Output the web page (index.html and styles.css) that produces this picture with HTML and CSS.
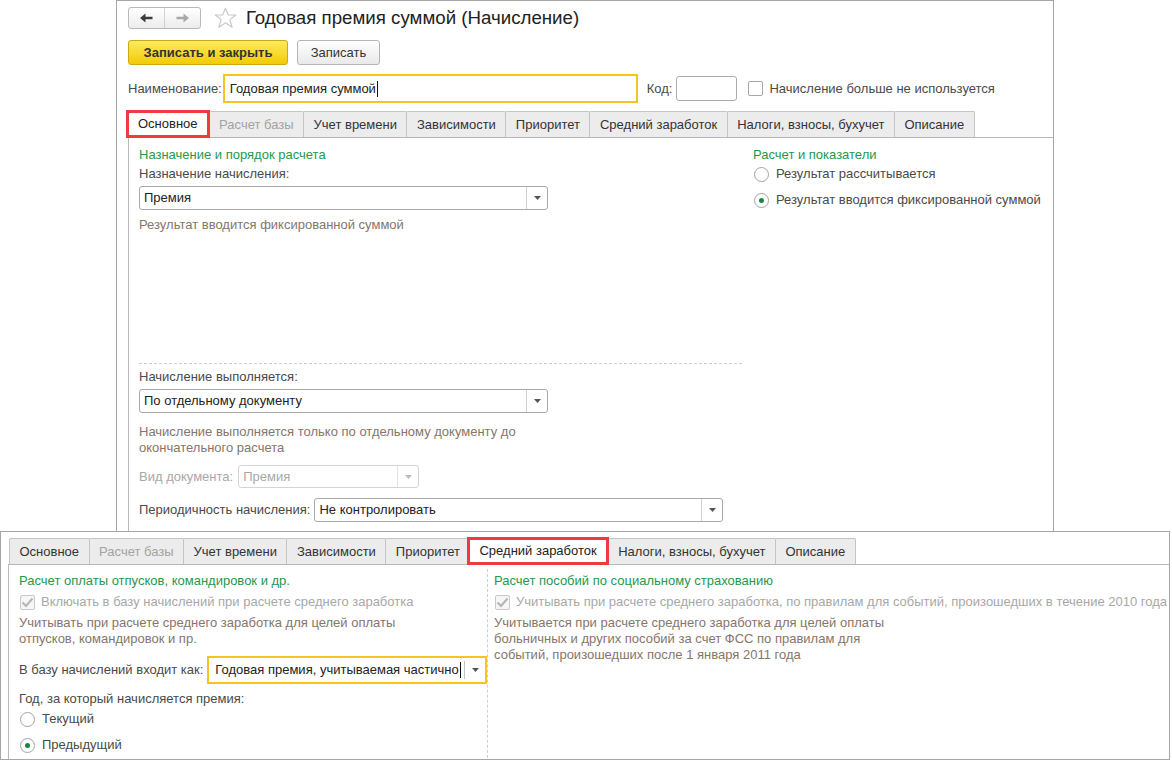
FILE: index.html
```html
<!DOCTYPE html>
<html lang="ru">
<head>
    <meta charset="UTF-8">
    <title>Годовая премия суммой (Начисление)</title>
    <link rel="stylesheet" href="styles.css">
</head>
<body>
    <div class="window main-window">
        <div class="win-head">
            <div class="nav-group">
                <span class="nav-btn">
                    <svg width="13" height="10" viewBox="0 0 13 10"><path d="M0 5L5.5 0.5V3.8H12.5V6.2H5.5V9.5Z" fill="#3c3c3c"/></svg>
                </span>
                <span class="nav-btn">
                    <svg width="13" height="10" viewBox="0 0 13 10"><path d="M13 5L7.5 0.5V3.8H0.5V6.2H7.5V9.5Z" fill="#a8a8a8"/></svg>
                </span>
            </div>
            <svg class="star" width="23" height="22" viewBox="0 0 23 22"><path d="M11.5 1.2L14.4 8H21.8L15.9 12.6L18.1 20.2L11.5 15.8L4.9 20.2L7.1 12.6L1.2 8H8.6Z" fill="none" stroke="#c9c9c9" stroke-width="1.2" stroke-linejoin="round"/></svg>
            <h1 class="win-title">Годовая премия суммой (Начисление)</h1>
        </div>

        <div class="cmd-bar">
            <button class="btn btn-primary">Записать и закрыть</button>
            <button class="btn btn-save">Записать</button>
        </div>

        <div class="field-row">
            <span class="label">Наименование:</span>
            <div class="input focused name-input">Годовая премия суммой<span class="caret"></span></div>
            <span class="label code-label">Код:</span>
            <div class="input code-input"></div>
            <span class="checkbox"></span>
            <span class="label check-label">Начисление больше не используется</span>
        </div>

        <div class="tabs">
            <div class="tab active">Основное</div>
            <div class="tab disabled">Расчет базы</div>
            <div class="tab">Учет времени</div>
            <div class="tab">Зависимости</div>
            <div class="tab">Приоритет</div>
            <div class="tab">Средний заработок</div>
            <div class="tab">Налоги, взносы, бухучет</div>
            <div class="tab">Описание</div>
        </div>

        <div class="tab-page">
            <div class="col col-main">
                <div class="group-title">Назначение и порядок расчета</div>
                <div class="label row-label">Назначение начисления:</div>
                <div class="select sel-wide sel-first">
                    <span class="select-value">Премия</span>
                    <span class="select-btn"><svg width="7" height="4" viewBox="0 0 7 4"><path d="M0 0H7L3.5 4Z" fill="#555"/></svg></span>
                </div>
                <div class="hint hint-first">Результат вводится фиксированной суммой</div>

                <div class="dashed-line"></div>

                <div class="label row-label after-line">Начисление выполняется:</div>
                <div class="select sel-wide sel-first">
                    <span class="select-value">По отдельному документу</span>
                    <span class="select-btn"><svg width="7" height="4" viewBox="0 0 7 4"><path d="M0 0H7L3.5 4Z" fill="#555"/></svg></span>
                </div>
                <div class="hint hint-doc">Начисление выполняется только по отдельному документу до<br>окончательного расчета</div>

                <div class="inline-row doc-row">
                    <span class="label disabled-text">Вид документа:</span>
                    <div class="select select-disabled sel-doc">
                        <span class="select-value">Премия</span>
                        <span class="select-btn"><svg width="7" height="4" viewBox="0 0 7 4"><path d="M0 0H7L3.5 4Z" fill="#bbb"/></svg></span>
                    </div>
                </div>

                <div class="inline-row period-row">
                    <span class="label">Периодичность начисления:</span>
                    <div class="select sel-wide sel-period">
                        <span class="select-value">Не контролировать</span>
                        <span class="select-btn"><svg width="7" height="4" viewBox="0 0 7 4"><path d="M0 0H7L3.5 4Z" fill="#555"/></svg></span>
                    </div>
                </div>
            </div>

            <div class="col col-side">
                <div class="group-title">Расчет и показатели</div>
                <div class="radio-row first-radio"><span class="radio"></span><span class="label">Результат рассчитывается</span></div>
                <div class="radio-row"><span class="radio checked"></span><span class="label">Результат вводится фиксированной суммой</span></div>
            </div>
        </div>
    </div>

    <div class="window bottom-window">
        <div class="tabs">
            <div class="tab">Основное</div>
            <div class="tab disabled">Расчет базы</div>
            <div class="tab">Учет времени</div>
            <div class="tab">Зависимости</div>
            <div class="tab">Приоритет</div>
            <div class="tab active">Средний заработок</div>
            <div class="tab">Налоги, взносы, бухучет</div>
            <div class="tab">Описание</div>
        </div>

        <div class="tab-page split">
            <div class="col col-half">
                <div class="group-title">Расчет оплаты отпусков, командировок и др.</div>
                <div class="check-row">
                    <span class="checkbox checked-disabled"><svg width="13" height="11" viewBox="0 0 13 11"><path d="M1.5 5.5L5 9L11.5 1.5" fill="none" stroke="#b4b4b4" stroke-width="2"/></svg></span>
                    <span class="label disabled-text">Включать в базу начислений при расчете среднего заработка</span>
                </div>
                <div class="hint hint-block">Учитывать при расчете среднего заработка для целей оплаты<br>отпусков, командировок и пр.</div>
                <div class="inline-row base-row">
                    <span class="label">В базу начислений входит как:</span>
                    <div class="input focused base-input">
                        <span class="select-value">Годовая премия, учитываемая частично<span class="caret"></span></span>
                        <span class="select-btn"><svg width="7" height="4" viewBox="0 0 7 4"><path d="M0 0H7L3.5 4Z" fill="#555"/></svg></span>
                    </div>
                </div>
                <div class="label year-label">Год, за который начисляется премия:</div>
                <div class="radio-row year-first"><span class="radio"></span><span class="label">Текущий</span></div>
                <div class="radio-row"><span class="radio checked"></span><span class="label">Предыдущий</span></div>
            </div>

            <div class="col col-social">
                <div class="group-title">Расчет пособий по социальному страхованию</div>
                <div class="check-row">
                    <span class="checkbox checked-disabled"><svg width="13" height="11" viewBox="0 0 13 11"><path d="M1.5 5.5L5 9L11.5 1.5" fill="none" stroke="#b4b4b4" stroke-width="2"/></svg></span>
                    <span class="label disabled-text nowrap">Учитывать при расчете среднего заработка, по правилам для событий, произошедших в течение 2010 года</span>
                </div>
                <div class="hint hint-block">Учитывается при расчете среднего заработка для целей оплаты<br>больничных и других пособий за счет ФСС по правилам для<br>событий, произошедших после 1 января 2011 года</div>
            </div>
        </div>
    </div>
</body>
</html>
```

FILE: styles.css
```css
body {
    margin: 0;
    width: 1172px;
    height: 760px;
    position: relative;
    overflow: hidden;
    background: #fff;
    font-family: 'Liberation Sans', Arial, sans-serif;
    font-size: 13px;
    line-height: 16px;
    color: #444;
}

/* windows */
.window {
    position: absolute;
    box-sizing: border-box;
    background: #fff;
    border: 1px solid #a6a6a6;
}
.main-window {
    left: 116px;
    top: 0;
    width: 938px;
    height: 560px;
    padding: 6px 0 0 11px;
}
.bottom-window {
    left: 0;
    top: 531px;
    width: 1170px;
    height: 229px;
    padding: 5px 0 0 7px;
    z-index: 2;
    overflow: hidden;
}

/* header */
.win-head {
    display: flex;
    align-items: center;
    height: 22px;
}
.nav-group {
    display: flex;
    width: 73px;
    height: 22px;
    box-sizing: border-box;
    border: 1px solid #b9b9b9;
    border-radius: 3px;
    background: linear-gradient(#fff, #ececec);
}
.nav-btn {
    flex: 1;
    display: flex;
    align-items: center;
    justify-content: center;
}
.nav-btn + .nav-btn {
    border-left: 1px solid #d2d2d2;
}
.star {
    margin-left: 13px;
}
.win-title {
    margin: 0 0 0 9px;
    font-size: 18.7px;
    font-weight: normal;
    color: #222;
    line-height: 22px;
}

.cmd-bar {
    display: flex;
    gap: 9px;
    margin-top: 11px;
}
.btn {
    height: 25px;
    box-sizing: border-box;
    border: 1px solid #b5b5b5;
    border-radius: 3px;
    background: linear-gradient(#fff, #e9e9e9);
    font-family: 'Liberation Sans', Arial, sans-serif;
    font-size: 13px;
    color: #333;
    padding: 0;
}
.btn-primary {
    width: 160px;
    background: linear-gradient(#fdeb5e, #f2cb07);
    border-color: #cdaa12;
    font-weight: bold;
}
.btn-save {
    width: 83px;
}

/* fields */
.label {
    color: #4a4a4a;
    white-space: nowrap;
}
.field-row {
    display: flex;
    align-items: center;
    height: 29px;
    margin-top: 9px;
}
.input {
    box-sizing: border-box;
    display: flex;
    align-items: center;
    height: 25px;
    border: 1px solid #ababab;
    border-radius: 3px;
    background: #fff;
    color: #222;
    padding-left: 5px;
}
.input.focused {
    border: 2px solid #f4c51f;
    border-radius: 0;
}
.name-input {
    width: 415px;
    height: 29px;
    margin-left: 1px;
}
.caret {
    display: inline-block;
    width: 1px;
    height: 16px;
    background: #111;
    vertical-align: middle;
    margin-left: 1px;
}
.code-label {
    margin-left: 9px;
}
.code-input {
    width: 61px;
    margin-left: 4px;
}
.checkbox {
    box-sizing: border-box;
    width: 15px;
    height: 15px;
    border: 1px solid #a6a6a6;
    border-radius: 2px;
    background: #fff;
    margin-left: 11px;
    display: inline-flex;
    align-items: center;
    justify-content: center;
}
.check-label {
    margin-left: 6px;
}

/* tabs */
.tabs {
    display: flex;
    align-items: flex-end;
    height: 27px;
    margin-top: 7px;
}
.bottom-window .tabs {
    margin-top: 0;
    padding-left: 1px;
}
.tab {
    box-sizing: border-box;
    height: 26px;
    display: flex;
    align-items: center;
    padding: 0 9.5px;
    margin-right: -1px;
    border: 1px solid #c4c4c4;
    border-bottom: none;
    border-radius: 2px 2px 0 0;
    background: #ececec;
    color: #333;
    white-space: nowrap;
}
.tab.disabled {
    color: #a3a3a3;
}
.tab.active {
    position: relative;
    z-index: 1;
    height: 28px;
    margin: 0 -1px -1px -2px;
    padding: 0 9px;
    background: #fff;
    border: 3px solid #ef3b3f;
    border-radius: 0;
    color: #222;
}

.tab-page {
    display: flex;
    border-top: 1px solid #b8b8b8;
    border-left: 1px solid #b8b8b8;
    padding: 9px 0 0 10px;
    height: 420px;
}
.bottom-window .tab-page {
    padding-top: 8px;
    height: 200px;
}

.col {
    display: flex;
    flex-direction: column;
}
.col-main {
    width: 603px;
}
.col-side {
    margin-left: 11px;
}

.group-title {
    color: #1d9a4e;
    white-space: nowrap;
}
.row-label {
    margin-top: 3px;
}
.hint {
    color: #85766a;
}
.disabled-text {
    color: #a8a8a8;
}

/* selects */
.select {
    display: flex;
    box-sizing: border-box;
    height: 24px;
    border: 1px solid #a9a9a9;
    border-radius: 3px;
    background: #fff;
}
.select-value {
    flex: 1;
    display: flex;
    align-items: center;
    padding-left: 4px;
    color: #222;
    white-space: nowrap;
}
.select-btn {
    width: 20px;
    display: flex;
    align-items: center;
    justify-content: center;
    border-left: 1px solid #d0d0d0;
}
.sel-wide {
    width: 409px;
}
.sel-first {
    margin-top: 4px;
}
.hint-first {
    margin-top: 7px;
}
.dashed-line {
    margin-top: 130px;
    border-top: 1px dashed #cfcfcf;
}
.after-line {
    margin-top: 5px;
}
.hint-doc {
    margin-top: 11px;
}
.inline-row {
    display: flex;
    align-items: center;
}
.doc-row {
    margin-top: 9px;
}
.sel-doc {
    width: 181px;
    height: 23px;
    margin-left: 5px;
    border-color: #d4d4d4;
}
.select-disabled .select-value {
    color: #a8a8a8;
}
.select-disabled .select-btn {
    border-left-color: #e2e2e2;
}
.period-row {
    margin-top: 10px;
}
.sel-period {
    margin-left: 4px;
}

/* radio buttons */
.radio-row {
    display: flex;
    align-items: center;
    gap: 7px;
    margin-top: 10px;
}
.first-radio {
    margin-top: 3px;
}
.radio {
    box-sizing: border-box;
    width: 15px;
    height: 15px;
    border: 1px solid #a3a3a3;
    border-radius: 50%;
    background: #fff;
    display: inline-flex;
    align-items: center;
    justify-content: center;
    margin-left: 1px;
}
.radio.checked::after {
    content: "";
    width: 5px;
    height: 5px;
    border-radius: 50%;
    background: #168a3e;
}

/* bottom form */
.col-half {
    width: 468px;
}
.col-social {
    border-left: 1px dashed #cfcfcf;
    margin-top: -4px;
    padding: 4px 0 0 6px;
}
.check-row {
    display: flex;
    align-items: center;
    gap: 6px;
    margin-top: 5px;
}
.check-row .checkbox {
    margin-left: 1px;
}
.checked-disabled {
    border-color: #c9c9c9;
    background: #f6f6f6;
}
.nowrap {
    white-space: nowrap;
}
.hint-block {
    margin-top: 5px;
}
.base-row {
    margin-top: 9px;
}
.base-input {
    width: 280px;
    height: 28px;
    margin-left: 4px;
    padding-left: 2px;
}
.base-input .select-btn {
    border-left-color: #c4c4c4;
    height: 18px;
}
.base-input .caret {
    margin-left: 1px;
}
.year-label {
    margin-top: 7px;
}
.year-first {
    margin-top: 4px;
}
```
